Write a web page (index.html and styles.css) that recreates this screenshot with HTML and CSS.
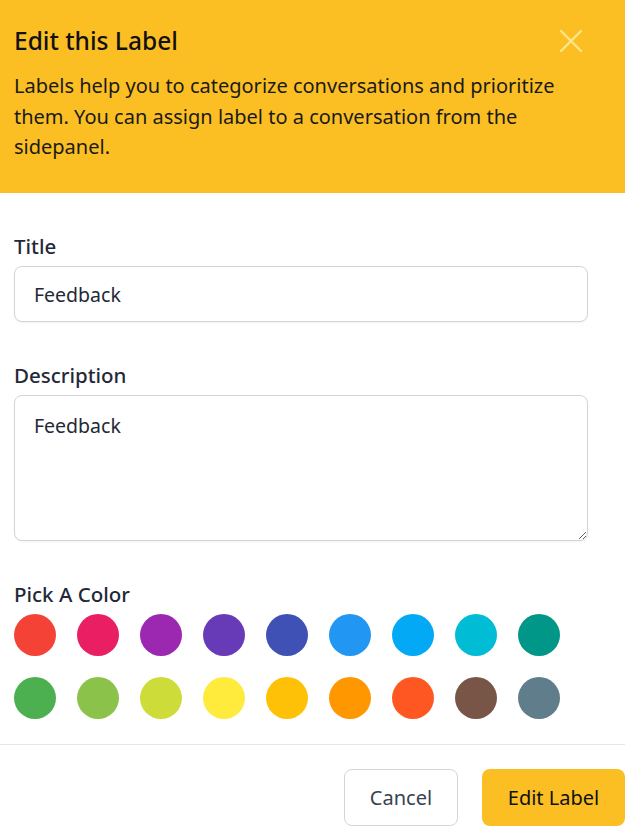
FILE: index.html
```html
<!DOCTYPE html>
<html lang="en">
<head>
<meta charset="utf-8">
<title>Edit this Label</title>
<link rel="stylesheet" href="styles.css">
</head>
<body>
<div class="modal">
  <header class="modal-header">
    <div class="header-top">
      <h2 class="modal-title">Edit this Label</h2>
      <button class="close-btn" aria-label="Close">
        <svg width="22" height="22" viewBox="0 0 22 22"><path d="M1 1 L21 21 M21 1 L1 21" stroke="#fde68a" stroke-width="2.4" stroke-linecap="round" fill="none"/></svg>
      </button>
    </div>
    <p class="modal-desc">Labels help you to categorize conversations and prioritize them. You can assign label to a conversation from the sidepanel.</p>
  </header>
  <div class="modal-body">
    <label class="field">
      <span class="field-label">Title</span>
      <input class="text-input" type="text" value="Feedback">
    </label>
    <label class="field">
      <span class="field-label">Description</span>
      <textarea class="text-area">Feedback</textarea>
    </label>
    <div class="field">
      <span class="field-label">Pick A Color</span>
      <div class="swatches">
        <span class="swatch" style="background:#f44336"></span>
        <span class="swatch" style="background:#e91e63"></span>
        <span class="swatch" style="background:#9c27b0"></span>
        <span class="swatch" style="background:#673ab7"></span>
        <span class="swatch" style="background:#3f51b5"></span>
        <span class="swatch" style="background:#2196f3"></span>
        <span class="swatch" style="background:#03a9f4"></span>
        <span class="swatch" style="background:#00bcd4"></span>
        <span class="swatch" style="background:#009688"></span>
        <span class="swatch" style="background:#4caf50"></span>
        <span class="swatch" style="background:#8bc34a"></span>
        <span class="swatch" style="background:#cddc39"></span>
        <span class="swatch" style="background:#ffeb3b"></span>
        <span class="swatch" style="background:#ffc107"></span>
        <span class="swatch" style="background:#ff9800"></span>
        <span class="swatch" style="background:#ff5722"></span>
        <span class="swatch" style="background:#795548"></span>
        <span class="swatch" style="background:#607d8b"></span>
      </div>
    </div>
  </div>
  <footer class="modal-footer">
    <button class="btn btn-cancel">Cancel</button>
    <button class="btn btn-primary">Edit Label</button>
  </footer>
</div>
</body>
</html>
```
FILE: styles.css
```css
* { box-sizing: border-box; }
html, body { margin: 0; padding: 0; background: #ffffff; }
body {
  font-family: "Noto Sans", "Open Sans", sans-serif;
  color: #1f2937;
  width: 625px;
  overflow: hidden;
}
.modal { width: 625px; }
.modal-header {
  background: #fbbf24;
  padding: 24px 14px 28px 14px;
  height: 193px;
}
.header-top {
  display: flex;
  justify-content: space-between;
  align-items: center;
}
.modal-title {
  margin: 0;
  font-size: 24.5px;
  font-weight: 500;
  color: #111111;
  line-height: 34px;
}
.close-btn {
  background: none;
  border: 0;
  padding: 0;
  margin-right: 29px;
  width: 22px;
  height: 22px;
  display: flex;
}
.modal-desc {
  margin: 13px 0 0 0;
  font-size: 20px;
  line-height: 30.5px;
  color: #1a1a1a;
}
.modal-body {
  padding: 40px 37px 0 14px;
  display: flex;
  flex-direction: column;
  gap: 40px;
}
.field { display: flex; flex-direction: column; }
.field-label {
  font-size: 20.5px;
  font-weight: 500;
  color: #1f2937;
  line-height: 26px;
  margin-bottom: 7px;
}
.text-input, .text-area {
  font-family: inherit;
  font-size: 19.5px;
  color: #1f2937;
  border: 1px solid #d1d5db;
  border-radius: 8px;
  padding: 0 19px;
  width: 100%;
  background: #fff;
  box-shadow: 0 1px 2px rgba(0, 0, 0, 0.05);
}
.text-input { height: 56px; }
.text-area {
  height: 146px;
  padding-top: 17px;
  line-height: 26px;
  resize: vertical;
}
.swatches {
  display: grid;
  grid-template-columns: repeat(9, 42px);
  gap: 21px;
}
.swatch {
  width: 42px;
  height: 42px;
  border-radius: 50%;
  display: block;
}
.modal-footer {
  margin-top: 25px;
  border-top: 1px solid #e5e7eb;
  padding: 24px 0 0 0;
  display: flex;
  justify-content: flex-end;
  gap: 24px;
}
.btn {
  font-family: inherit;
  font-size: 20px;
  height: 57px;
  border-radius: 8px;
  padding: 0;
  cursor: pointer;
}
.btn-cancel {
  background: #fff;
  border: 1px solid #d1d5db;
  color: #374151;
  width: 114px;
}
.btn-primary {
  background: #fbbf24;
  border: 0;
  color: #111111;
  width: 143px;
}
```
